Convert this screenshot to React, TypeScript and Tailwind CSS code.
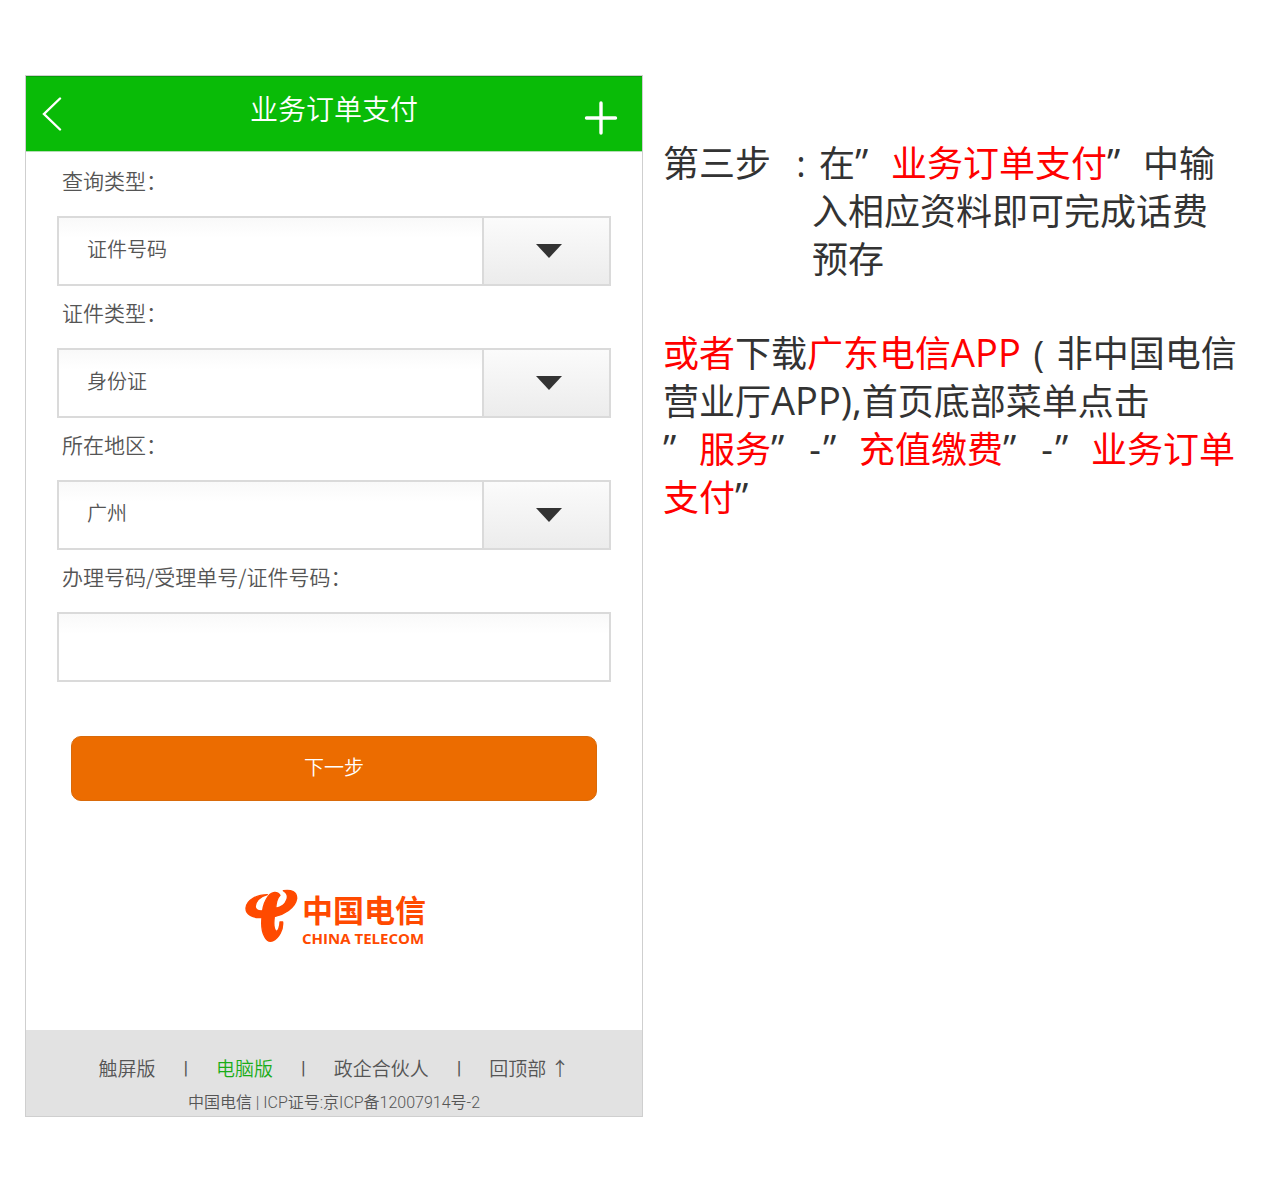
// Order payment page: the mobile form on the left, the written step on the right.

import { useState } from 'react'
import { clsx } from 'clsx'

interface SelectRowProps {
  id: string
  label: string
  options: string[]
}

const selectRows: SelectRowProps[] = [
  { id: 'query-type', label: '查询类型：', options: ['证件号码', '办理号码', '受理单号'] },
  { id: 'id-type', label: '证件类型：', options: ['身份证', '护照'] },
  { id: 'region', label: '所在地区：', options: ['广州', '深圳', '东莞'] },
]

const footerLinks = [
  { label: '触屏版', active: false },
  { label: '电脑版', active: true },
  { label: '政企合伙人', active: false },
  { label: '回顶部 ↑', active: false },
]

const controlCls =
  'h-[70px] w-full appearance-none rounded-none border-2 border-[#dadada] bg-linear-to-b from-[#f9f9f9] to-white to-30% px-7 pb-1 text-[20px] text-[#555] outline-none'

export default function App() {
  return (
    <main className="flex flex-col gap-5 bg-white px-[25px] pt-[75px] pb-[75px] font-['Noto_Sans_CJK_SC',sans-serif] lg:flex-row lg:items-start">
      <PaymentForm />
      <Instructions />
    </main>
  )
}

function PaymentForm() {
  const [number, setNumber] = useState('')

  return (
    <section className="w-full max-w-[618px] shrink-0 border border-[#cfcfcf] bg-white font-[350]">
      <header className="grid h-[76px] grid-cols-[1fr_auto_1fr] items-center border-t border-b border-t-[#0a9a0a] border-b-[#b5dcb5] bg-[#09bb07] px-4 text-white">
        <button type="button" aria-label="返回" className="justify-self-start">
          <svg viewBox="0 0 20 34" className="h-[34px] w-5" fill="none" stroke="currentColor" strokeWidth="2.4" strokeLinecap="round">
            <path d="M18 1.5 2 17l16 15.5" />
          </svg>
        </button>
        <h1 className="pb-3 text-[28px] leading-10">业务订单支付</h1>
        <button type="button" aria-label="添加" className="justify-self-end pt-2 pr-2">
          <svg viewBox="0 0 34 34" className="size-[34px]" fill="none" stroke="currentColor" strokeWidth="3.4" strokeLinecap="round">
            <path d="M17 2v30M2.500 17h29" />
          </svg>
        </button>
      </header>

      <form className="px-[31px] pt-[2px]" onSubmit={(e) => e.preventDefault()}>
        {selectRows.map((row) => (
          <SelectRow key={row.id} {...row} />
        ))}
        <FieldLabel id="number" text="办理号码/受理单号/证件号码：" />
        <input
          id="number"
          type="text"
          value={number}
          onChange={(e) => setNumber(e.target.value)}
          className={clsx(controlCls, 'block')}
        />
        <div className="px-[14px] pt-[54px]">
          <button
            type="submit"
            className="block h-[65px] w-full rounded-[10px] border border-[#d96a0a] bg-[#ec6c00] pb-1 text-[20px] text-white"
          >
            下一步
          </button>
        </div>
      </form>

      <div className="flex justify-center pt-[87px] pb-[86px]">
        <TelecomLogo />
      </div>

      <footer className="bg-[#e2e2e2] pt-6 text-[#555]">
        <nav className="flex items-center justify-center gap-7 text-[19px] leading-7">
          {footerLinks.map((link, i) => (
            <span key={link.label} className="flex items-center gap-7">
              {i > 0 && <span className="font-[Roboto,sans-serif] font-normal">|</span>}
              <a href="#" className={link.active ? 'text-[#1aad19]' : undefined}>
                {link.label}
              </a>
            </span>
          ))}
        </nav>
        <p className="pt-2 text-center font-[Roboto,'Noto_Sans_CJK_SC',sans-serif] text-[16px] leading-[26px]">
          中国电信 | ICP证号:京ICP备12007914号-2
        </p>
      </footer>
    </section>
  )
}

function FieldLabel({ id, text }: { id: string; text: string }) {
  return (
    <label htmlFor={id} className="block h-[62px] px-[5px] text-[21px] leading-[53px] text-[#555]">
      {text}
    </label>
  )
}

function SelectRow({ id, label, options }: SelectRowProps) {
  return (
    <div>
      <FieldLabel id={id} text={label} />
      <div className="relative">
        <select id={id} className={clsx(controlCls, 'block')}>
          {options.map((o) => (
            <option key={o}>{o}</option>
          ))}
        </select>
        <span className="pointer-events-none absolute inset-y-0 right-0 flex w-[129px] items-center justify-center border-2 border-[#dadada] bg-linear-to-b from-[#fbfbfb] to-[#ececec] pl-1">
          <svg viewBox="0 0 26 14" className="h-[14px] w-[26px]" fill="#333">
            <path d="M0 0h26L13 14z" />
          </svg>
        </span>
      </div>
    </div>
  )
}

function TelecomLogo() {
  return (
    <div className="flex items-start gap-[2px] pl-[2px] text-[#ff4a00]">
      <svg viewBox="6 12 168 168" className="size-14" fill="currentColor" stroke="currentColor" strokeWidth="4" strokeLinejoin="round">
        <path d="M76 32C45 32 14 48 12 72C11 90 32 104 60 100C58 120 60 145 68 158C74 170 84 174 92 171C110 162 124 138 122 114L114 114C114 130 108 142 102 142C96 136 94 120 97 98C125 92 160 72 164 44C165 24 148 16 124 20C134 26 140 34 134 48C130 60 116 70 101 73C102 58 106 42 114 34C106 22 90 22 78 38C68 52 64 64 62 80C48 82 38 76 40 66C42 50 56 38 76 32Z" />
      </svg>
      <div>
        <div className="h-[42px] text-[31px] leading-[42px] font-bold">中国电信</div>
        <div className="h-[14px] font-['Open_Sans',sans-serif] text-[15px] leading-[16px] font-bold">CHINA TELECOM</div>
      </div>
    </div>
  )
}

function Instructions() {
  return (
    <article className="min-w-0 flex-1 pt-[62px] text-[36px] leading-[48px] text-[#333]">
      <div className="flex">
        <p className="w-[120px] shrink-0">第三步</p>
        <p className="min-w-0">
          <Cell>:</Cell>在<Quote />
          <Red>业务订单支付</Red>
          <Quote />
          中输
        </p>
      </div>
      <p className="pl-[149px]">
        入相应资料即可完成话费
        <br />
        预存
      </p>

      <p className="pt-[46px]">
        <Red>或者</Red>下载
        <Red>
          广东电信<Latin>APP</Latin>
        </Red>
        <Cell>(</Cell>非中国电信
        <br />
        营业厅<Latin>APP),</Latin>首页底部菜单点击
        <br />
        <Quote />
        <Red>服务</Red>
        <Quote />
        <Dash />
        <Quote />
        <Red>充值缴费</Red>
        <Quote />
        <Dash />
        <Quote />
        <Red>业务订单</Red>
        <br />
        <Red>支付</Red>
        <Quote />
      </p>
    </article>
  )
}

function Red({ children }: { children: React.ReactNode }) {
  return <span className="text-[#ff0000]">{children}</span>
}

function Latin({ children }: { children: React.ReactNode }) {
  return <span className="font-['Open_Sans',sans-serif] text-[38px] leading-none">{children}</span>
}

// Punctuation that takes up one full character cell.
function Cell({ children }: { children: React.ReactNode }) {
  return (
    <span className="inline-block w-9 text-center font-['Open_Sans',sans-serif] leading-none">{children}</span>
  )
}

function Quote() {
  return <span className="inline-block w-9 font-['Open_Sans',sans-serif] text-[38px] leading-none">”</span>
}

function Dash() {
  return <span className="inline-block w-4 text-center font-['Open_Sans',sans-serif] leading-none">-</span>
}
